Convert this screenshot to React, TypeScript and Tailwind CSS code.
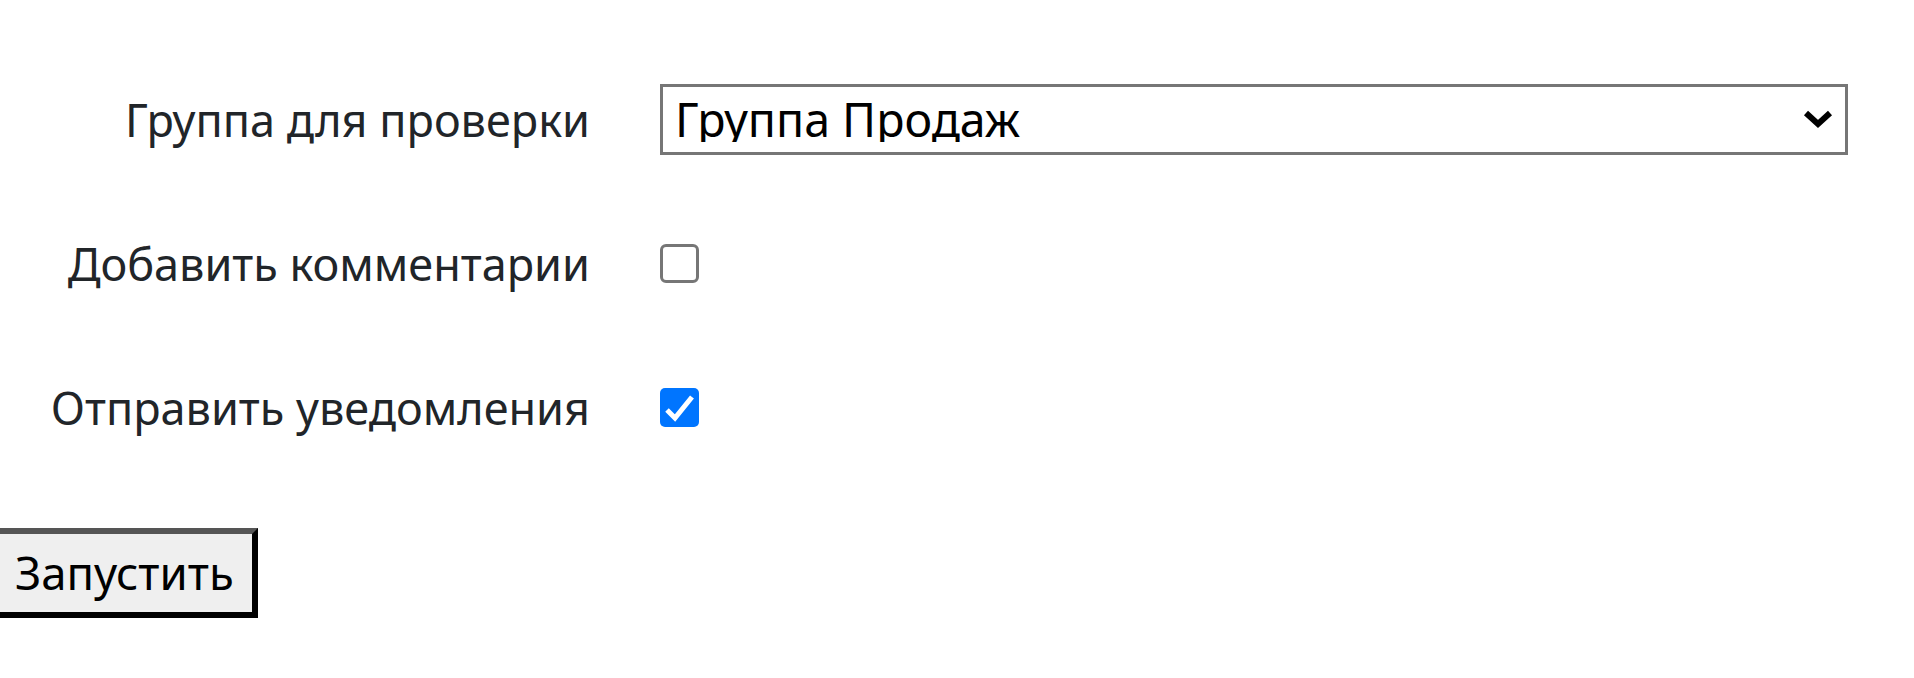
import React from "react";

const CheckBox = ({ checked }: { checked: boolean }) => {
  if (checked) {
    return (
      <span className="flex w-[39px] h-[39px] items-center justify-center rounded-[5px] bg-[#0075ff]">
        <svg width="39" height="39" viewBox="0 0 39 39">
          <path d="M7 22 L15 30 L32 9" fill="none" stroke="#ffffff" strokeWidth="5" />
        </svg>
      </span>
    );
  }
  return <span className="block w-[39px] h-[39px] rounded-[6px] border-[3px] border-[#767676] bg-white" />;
};

const Row = ({ label, children }: { label: string; children: React.ReactNode }) => (
  <div className="flex h-[144px] items-center gap-[70px]">
    <label className="w-[590px] shrink-0 text-right text-[#212529] text-[45px] leading-none">{label}</label>
    {children}
  </div>
);

export default function App() {
  return (
    <div className="min-h-screen bg-white pt-[47px] font-['Noto_Sans','Open_Sans',sans-serif]">
      <Row label="Группа для проверки">
        <div className="relative w-[1188px] h-[71px]">
          <select className="w-full h-full appearance-none border-[3px] border-[#767676] bg-white pl-[12px] text-black text-[46.5px] leading-none outline-none">
            <option>Группа Продаж</option>
          </select>
          <svg
            className="absolute right-[15px] top-[25px] pointer-events-none"
            width="30"
            height="20"
            viewBox="0 0 30 20"
          >
            <path d="M3 4 L15 15 L27 4" fill="none" stroke="#000000" strokeWidth="6" />
          </svg>
        </div>
      </Row>
      <Row label="Добавить комментарии">
        <CheckBox checked={false} />
      </Row>
      <Row label="Отправить уведомления">
        <CheckBox checked={true} />
      </Row>
      <button className="mt-[49px] h-[90px] w-[258px] border-t-[6px] border-r-[6px] border-b-[6px] border-t-[#555555] border-r-black border-b-black bg-[#efefef] pl-[15px] text-left text-black text-[45.5px] leading-none">
        Запустить
      </button>
    </div>
  );
}
